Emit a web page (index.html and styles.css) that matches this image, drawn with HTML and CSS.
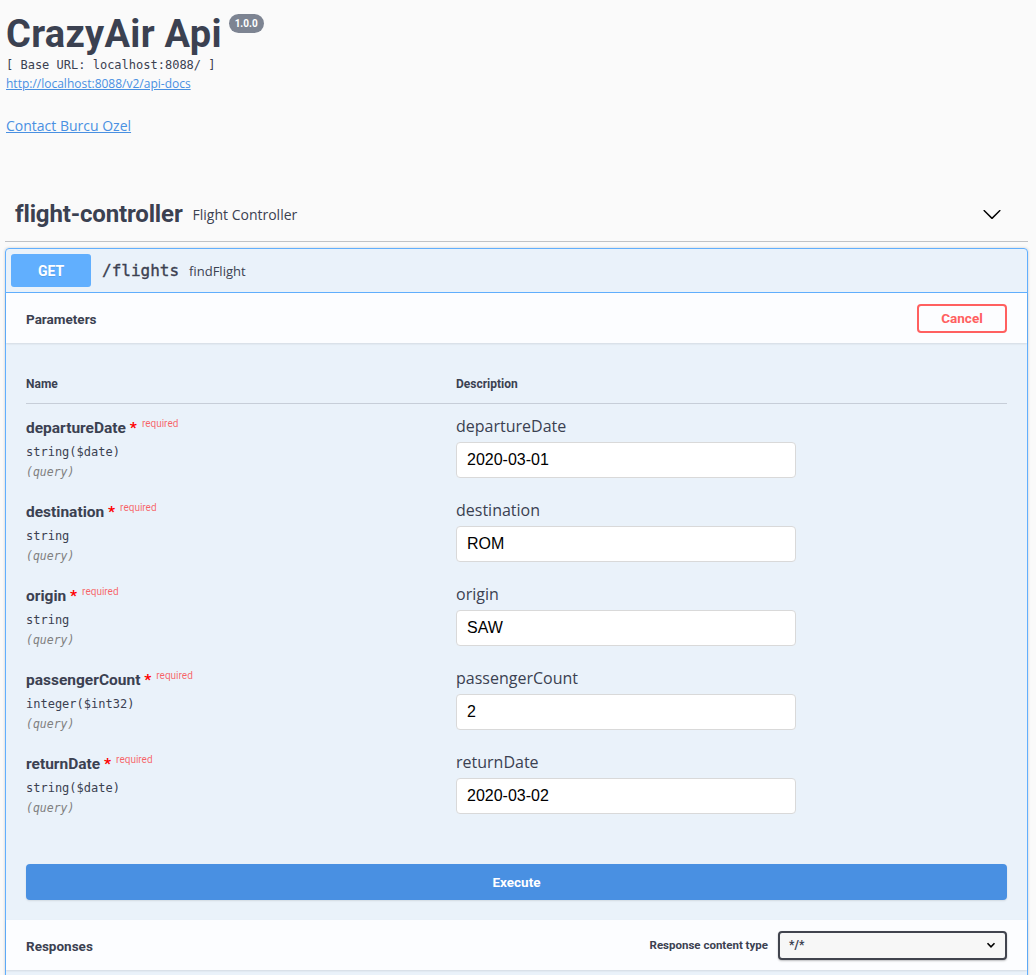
FILE: index.html
```html
<!DOCTYPE html>
<html lang="en">
<head>
<meta charset="utf-8">
<title>CrazyAir Api</title>
<link rel="stylesheet" href="styles.css">
</head>
<body>
<div class="wrapper">
  <div class="info">
    <h2 class="title">CrazyAir Api <span class="version">1.0.0</span></h2>
    <div class="base-url">[ Base URL: localhost:8088/ ]</div>
    <a class="spec-link" href="#">http://localhost:8088/v2/api-docs</a>
    <div class="contact"><a href="#">Contact Burcu Ozel</a></div>
  </div>

  <div class="tag">
    <h3 class="tag-title">
      <span class="tag-name">flight-controller</span>
      <span class="tag-desc">Flight Controller</span>
      <svg class="tag-arrow" width="20" height="20" viewBox="0 0 20 20"><path d="M17.418 6.109c.272-.268.709-.268.979 0s.271.701 0 .969l-7.908 7.83c-.27.268-.707.268-.979 0l-7.908-7.830c-.27-.268-.27-.701 0-.969.271-.268.709-.268.979 0L10 13.25l7.418-7.141z" fill="#000"/></svg>
    </h3>

    <div class="opblock">
      <div class="summary">
        <span class="method">GET</span>
        <span class="path">/flights</span>
        <span class="op-desc">findFlight</span>
      </div>

      <div class="section-header">
        <h4 class="section-title">Parameters</h4>
        <button class="btn-cancel">Cancel</button>
      </div>

      <div class="params">
        <div class="params-head">
          <div class="th">Name</div>
          <div class="th">Description</div>
        </div>

        <div class="param-row">
          <div class="p-name-col">
            <div class="p-name">departureDate<span class="star">&nbsp;*</span><span class="req">required</span></div>
            <div class="p-type">string($date)</div>
            <div class="p-in">(query)</div>
          </div>
          <div class="p-desc-col">
            <div class="p-label">departureDate</div>
            <input class="p-input" type="text" value="2020-03-01">
          </div>
        </div>

        <div class="param-row">
          <div class="p-name-col">
            <div class="p-name">destination<span class="star">&nbsp;*</span><span class="req">required</span></div>
            <div class="p-type">string</div>
            <div class="p-in">(query)</div>
          </div>
          <div class="p-desc-col">
            <div class="p-label">destination</div>
            <input class="p-input" type="text" value="ROM">
          </div>
        </div>

        <div class="param-row">
          <div class="p-name-col">
            <div class="p-name">origin<span class="star">&nbsp;*</span><span class="req">required</span></div>
            <div class="p-type">string</div>
            <div class="p-in">(query)</div>
          </div>
          <div class="p-desc-col">
            <div class="p-label">origin</div>
            <input class="p-input" type="text" value="SAW">
          </div>
        </div>

        <div class="param-row">
          <div class="p-name-col">
            <div class="p-name">passengerCount<span class="star">&nbsp;*</span><span class="req">required</span></div>
            <div class="p-type">integer($int32)</div>
            <div class="p-in">(query)</div>
          </div>
          <div class="p-desc-col">
            <div class="p-label">passengerCount</div>
            <input class="p-input" type="text" value="2">
          </div>
        </div>

        <div class="param-row">
          <div class="p-name-col">
            <div class="p-name">returnDate<span class="star">&nbsp;*</span><span class="req">required</span></div>
            <div class="p-type">string($date)</div>
            <div class="p-in">(query)</div>
          </div>
          <div class="p-desc-col">
            <div class="p-label">returnDate</div>
            <input class="p-input" type="text" value="2020-03-02">
          </div>
        </div>
      </div>

      <div class="execute-wrapper">
        <button class="btn-execute">Execute</button>
      </div>

      <div class="section-header responses-header">
        <h4 class="section-title">Responses</h4>
        <div class="content-type">
          <span class="ct-label">Response content type</span>
          <div class="select">
            <span>*/*</span>
            <svg width="10" height="8" viewBox="0 0 10 8"><path d="M1.5 2.2 5 5.8 8.5 2.2" fill="none" stroke="#000" stroke-width="1.6"/></svg>
          </div>
        </div>
      </div>

      <div class="responses-body"></div>
    </div>
  </div>
</div>
</body>
</html>
```

FILE: styles.css
```css
* { box-sizing: border-box; }

body {
  margin: 0;
  background: #fafafa;
  color: #3b4151;
  font-family: "Open Sans", sans-serif;
}

.wrapper {
  padding: 0 8px 0 5px;
}

.info {
  padding-left: 1px;
}

.title {
  margin: 11px 0 0;
  font-family: Roboto, sans-serif;
  font-weight: 700;
  font-size: 38px;
  line-height: 46px;
  letter-spacing: 0.3px;
  color: #3b4151;
}

.version {
  display: inline-block;
  vertical-align: top;
  margin: 3px 0 0 -3px;
  padding: 0 6px;
  height: 19px;
  line-height: 19px;
  border-radius: 57px;
  background: #7d8492;
  color: #fff;
  font-size: 10px;
  letter-spacing: 0;
  font-weight: 700;
  font-family: Roboto, sans-serif;
}

.base-url {
  font-family: "DejaVu Sans Mono", monospace;
  font-size: 12px;
  line-height: 16px;
  color: #3b4151;
}

.spec-link {
  display: block;
  margin-top: 3px;
  font-size: 12px;
  line-height: 16px;
  color: #4990e2;
}

.contact {
  margin-top: 24px;
  font-size: 14px;
  line-height: 20px;
}
.contact a { color: #4990e2; }

.tag-title {
  display: flex;
  align-items: center;
  margin: 50px 0 6px;
  padding: 10px 26px 9px 10px;
  border-bottom: 1px solid rgba(59, 65, 81, .3);
  font-weight: 400;
}

.tag-name {
  font-family: Roboto, sans-serif;
  font-weight: 700;
  font-size: 24px;
  line-height: 36px;
  letter-spacing: -0.15px;
}

.tag-desc {
  flex: 1;
  padding-left: 10px;
  font-size: 14px;
  line-height: 20px;
  padding-top: 2px;
}

.tag-arrow { display: block; }

.opblock {
  border: 1px solid #61affe;
  border-radius: 4px;
  background: rgba(97, 175, 254, .1);
  box-shadow: 0 0 3px rgba(0, 0, 0, .19);
}

.summary {
  display: flex;
  align-items: center;
  padding: 5px;
  border-bottom: 1px solid #61affe;
}

.method {
  width: 80px;
  height: 33px;
  line-height: 34px;
  text-align: center;
  border-radius: 3px;
  background: #61affe;
  color: #fff;
  font-family: Roboto, sans-serif;
  font-weight: 700;
  font-size: 14px;
  text-shadow: 0 1px 0 rgba(0, 0, 0, .1);
}

.path {
  padding: 0 10px 0 11px;
  font-family: "DejaVu Sans Mono", monospace;
  font-size: 16px;
  font-weight: 400;
  -webkit-text-stroke: 0.35px #3b4151;
  color: #3b4151;
}

.op-desc {
  font-size: 13px;
  color: #3b4151;
}

.section-header {
  display: flex;
  align-items: center;
  justify-content: space-between;
  min-height: 50px;
  padding: 0 20px;
  background: rgba(255, 255, 255, .85);
  box-shadow: 0 1px 2px rgba(0, 0, 0, .1);
}

.section-title {
  margin: 0;
  padding-top: 1px;
  font-family: Roboto, sans-serif;
  font-weight: 700;
  font-size: 13.5px;
  color: #3b4151;
}

.btn-cancel {
  width: 90px;
  height: 29px;
  border: 2px solid #ff6060;
  border-radius: 4px;
  background: transparent;
  color: #ff6060;
  font-family: Roboto, sans-serif;
  font-weight: 700;
  font-size: 13.5px;
  padding: 0;
}

.params {
  padding: 20px;
}

.params-head {
  display: grid;
  grid-template-columns: 430px 1fr;
  padding: 12px 0 11px;
  border-bottom: 1px solid rgba(59, 65, 81, .2);
}

.th {
  padding-top: 1px;
  font-family: Roboto, sans-serif;
  font-weight: 700;
  font-size: 12px;
  line-height: 16px;
}

.param-row {
  display: grid;
  grid-template-columns: 430px 1fr;
  padding: 10px 0;
}

.p-name-col {
  padding-top: 4px;
}

.p-name {
  font-family: Roboto, sans-serif;
  font-weight: 700;
  font-size: 15.5px;
  line-height: 20px;
}

.star {
  color: red;
}

.req {
  font-size: 10px;
  line-height: 10px;
  font-weight: 400;
  color: rgba(255, 0, 0, .6);
  padding-left: 5px;
  vertical-align: 6px;
}

.p-type {
  margin-top: 6px;
  font-family: "DejaVu Sans Mono", monospace;
  font-size: 12px;
  line-height: 16px;
  color: #3b4151;
}

.p-in {
  margin-top: 4px;
  margin-bottom: -2px;
  font-family: "DejaVu Sans Mono", monospace;
  font-style: italic;
  font-size: 11.5px;
  line-height: 16px;
  color: #808080;
}

.p-desc-col {
  padding-top: 1px;
}

.p-label {
  font-size: 16px;
  line-height: 22px;
  color: #3b4151;
}

.p-input {
  display: block;
  width: 340px;
  height: 36px;
  margin-top: 5px;
  padding: 0 10px;
  border: 1px solid #d9d9d9;
  border-radius: 4px;
  background: #fff;
  font-family: "Liberation Sans", Arial, sans-serif;
  font-size: 16px;
  color: #000;
  outline: none;
}

.execute-wrapper {
  padding: 20px;
}

.btn-execute {
  display: block;
  width: 100%;
  height: 36px;
  border: 0;
  border-radius: 4px;
  background: #4990e2;
  color: #fff;
  font-family: Roboto, sans-serif;
  font-weight: 700;
  font-size: 13.5px;
  box-shadow: 0 1px 2px rgba(0, 0, 0, .1);
}

.content-type {
  display: flex;
  align-items: center;
  gap: 10px;
}

.ct-label {
  font-family: Roboto, sans-serif;
  font-weight: 700;
  font-size: 11.5px;
}

.select {
  display: flex;
  align-items: center;
  justify-content: space-between;
  width: 229px;
  height: 29px;
  padding: 0 9px 0 9px;
  border: 2px solid #41444e;
  border-radius: 4px;
  background: #f7f7f7;
  box-shadow: 0 1px 2px rgba(0, 0, 0, .25);
  font-family: Roboto, sans-serif;
  font-weight: 700;
  font-size: 12px;
}

.select svg { display: block; }

.responses-body {
  height: 120px;
}
```
